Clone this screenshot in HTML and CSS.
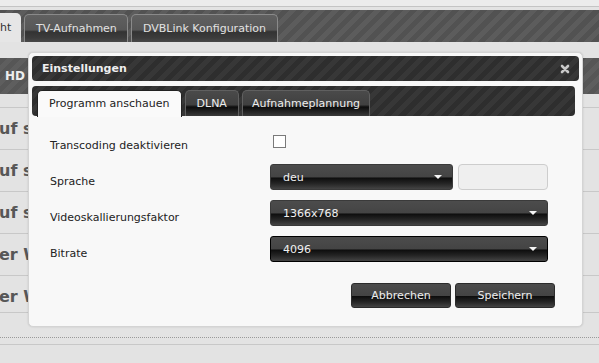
FILE: index.html
```html
<!DOCTYPE html>
<html lang="de">
<head>
<meta charset="utf-8">
<title>Einstellungen</title>
<link rel="stylesheet" href="styles.css">
</head>
<body>
<div class="page">
  <div class="topstrip"></div>
  <div class="mainnav">
    <div class="mtab mtab-active">ht</div>
    <div class="mtab mtab-tv">TV-Aufnahmen</div>
    <div class="mtab mtab-dvb">DVBLink Konfiguration</div>
  </div>
  <div class="content">
    <div class="hdbar">HD</div>
    <div class="list">
      <div class="lrow">uf s</div>
      <div class="lrow">uf s</div>
      <div class="lrow">uf s</div>
      <div class="lrow">er W</div>
      <div class="lrow">er W</div>
    </div>
    <div class="dotted"></div>
    <div class="solid"></div>
  </div>
</div>

<div class="dlg">
  <div class="dlg-title">
    <span class="dlg-title-text">Einstellungen</span>
    <svg class="dlg-close" width="10" height="10" viewBox="0 0 10 10"><path d="M2 2 L8 8 M8 2 L2 8" stroke="#c8c8c8" stroke-width="2.6" stroke-linecap="round"/></svg>
  </div>
  <div class="dlg-body">
    <div class="tabs-nav">
      <div class="dtab dtab-active">Programm anschauen</div>
      <div class="dtab">DLNA</div>
      <div class="dtab dtab-plan">Aufnahmeplannung</div>
    </div>
    <div class="form">
      <div class="lbl">Transcoding deaktivieren</div>
      <div class="ctl"><div class="chk"></div></div>

      <div class="lbl">Sprache</div>
      <div class="ctl ctl-split">
        <div class="sel sel-short"><span>deu</span><i class="arrow"></i></div>
        <div class="txt"></div>
      </div>

      <div class="lbl">Videoskallierungsfaktor</div>
      <div class="ctl"><div class="sel"><span>1366x768</span><i class="arrow"></i></div></div>

      <div class="lbl">Bitrate</div>
      <div class="ctl"><div class="sel sel-focus"><span>4096</span><i class="arrow"></i></div></div>
    </div>
  </div>
  <div class="dlg-buttons">
    <div class="btn">Abbrechen</div>
    <div class="btn">Speichern</div>
  </div>
</div>
</body>
</html>
```

FILE: styles.css
```css
html, body {
  margin: 0;
  padding: 0;
}
body {
  width: 599px;
  height: 363px;
  overflow: hidden;
  background: #e3e3e3;
  font-family: "DejaVu Sans", Verdana, sans-serif;
  font-size: 11px;
  position: relative;
}

/* ---------- background page ---------- */
.topstrip {
  height: 6px;
  background: #ececec;
  border-bottom: 1px solid #c4c4c4;
  margin-bottom: 3px;
}
.mainnav {
  height: 32px;
  display: flex;
  align-items: flex-end;
  gap: 3px;
  background: repeating-linear-gradient(135deg, #525252 0 5px, #5c5c5c 5px 10px);
}
.mtab {
  height: 27px;
  line-height: 27px;
  padding: 0 11px;
  color: #e2e2e2;
  border: 1px solid #8a8a8a;
  border-bottom: none;
  border-radius: 5px 5px 0 0;
  background: linear-gradient(to bottom, #606060 0%, #575757 55%, #333 62%, #3c3c3c 85%, #4a4a4a 100%);
  white-space: nowrap;
}
.mtab-active {
  height: 29px;
  line-height: 30px;
  padding: 0 4px 0 0;
  border: none;
  border-radius: 0 5px 0 0;
  width: 17px;
  background: #e6e6e6;
  color: #333;
}
.mtab-tv { width: 80px; }
.mtab-dvb { width: 123px; }

.content {
  padding-top: 16px;
}
.hdbar {
  height: 36px;
  line-height: 36px;
  padding-left: 5px;
  font-weight: bold;
  font-size: 12px;
  color: #eee;
  background: repeating-linear-gradient(135deg, #565656 0 5px, #5e5e5e 5px 10px);
}
.list {
  margin-top: 13px;
}
.lrow {
  height: 41px;
  line-height: 41px;
  border-top: 1px solid #c8c8c8;
  font-size: 16px;
  font-weight: bold;
  color: #575757;
  white-space: nowrap;
  overflow: hidden;
  text-indent: -1px;
}
.lrow:last-child {
  height: 36px;
  border-bottom: 1px solid #c8c8c8;
}
.dotted {
  margin-top: 24px;
  border-top: 1px dotted #9a9a9a;
}
.solid {
  margin-top: 6px;
  border-top: 1px solid #c8c8c8;
}

/* ---------- dialog ---------- */
.dlg {
  position: absolute;
  left: 28px;
  top: 52px;
  width: 555px;
  height: 275px;
  box-sizing: border-box;
  padding: 3px;
  background: #f8f8f8;
  border: 1px solid #d4d4d4;
  border-radius: 5px;
  box-shadow: 0 0 2px rgba(0,0,0,0.15);
}
.dlg-title {
  height: 25px;
  display: flex;
  align-items: center;
  justify-content: space-between;
  padding: 0 9px 0 10px;
  border-radius: 4px;
  background: repeating-linear-gradient(135deg, #2e2e2e 0 5px, #373737 5px 10px);
}
.dlg-title-text {
  color: #eee;
  font-weight: bold;
  font-size: 11px;
}
.dlg-close {
  display: block;
}
.dlg-body {
  padding: 5px 4px 0 0;
}
.tabs-nav {
  height: 26px;
  padding: 4px 0 0 5px;
  display: flex;
  gap: 3px;
  align-items: flex-end;
  border-radius: 4px;
  background: repeating-linear-gradient(135deg, #2e2e2e 0 5px, #373737 5px 10px);
}
.dtab {
  height: 25px;
  line-height: 26px;
  padding: 0 11px;
  color: #eee;
  border: 1px solid #606060;
  border-bottom: none;
  border-radius: 5px 5px 0 0;
  background: linear-gradient(to bottom, #4a4a4a 0%, #404040 55%, #0c0c0c 64%, #262626 85%, #3a3a3a 100%);
  white-space: nowrap;
}
.dtab-active {
  height: 26px;
  padding: 0 11px;
  background: #fafafa;
  color: #222;
  border-color: #222;
  margin-bottom: -1px;
}
.dtab-plan {
  padding: 0 9px;
}

.form {
  display: grid;
  grid-template-columns: 220px 278px;
  grid-auto-rows: 26px;
  row-gap: 10px;
  padding: 12px 0 0 18px;
}
.lbl {
  color: #222;
  padding-top: 11px;
  line-height: 13px;
  white-space: nowrap;
}
.ctl {
  display: flex;
  align-items: center;
}
.ctl-split {
  gap: 5px;
}
.chk {
  width: 11px;
  height: 11px;
  margin-left: 3px;
  background: #fff;
  border: 1px solid #7a7a7a;
}
.sel {
  flex: 1;
  height: 26px;
  box-sizing: border-box;
  display: flex;
  align-items: center;
  justify-content: space-between;
  padding: 0 10px 0 12px;
  color: #f0f0f0;
  border: 1px solid #3a3a3a;
  border-radius: 3px;
  background: linear-gradient(to bottom, #4c4c4c 0%, #444 50%, #0d0d0d 54%, #262626 78%, #444 100%);
}
.sel-short {
  flex: 0 0 183px;
}
.sel-focus {
  border-color: #000;
}
.arrow {
  width: 0;
  height: 0;
  border-left: 4px solid transparent;
  border-right: 4px solid transparent;
  border-top: 4px solid #f4f4f4;
}
.txt {
  width: 90px;
  height: 26px;
  box-sizing: border-box;
  background: #efefef;
  border: 1px solid #cdcdcd;
  border-radius: 4px;
}

.dlg-buttons {
  display: flex;
  justify-content: flex-end;
  gap: 4px;
  margin-top: 21px;
  padding-right: 24px;
}
.btn {
  width: 100px;
  height: 25px;
  box-sizing: border-box;
  line-height: 23px;
  text-align: center;
  color: #eee;
  border: 1px solid #2c2c2c;
  border-radius: 3px;
  background: linear-gradient(to bottom, #4c4c4c 0%, #444 50%, #0d0d0d 54%, #262626 78%, #444 100%);
}
```
